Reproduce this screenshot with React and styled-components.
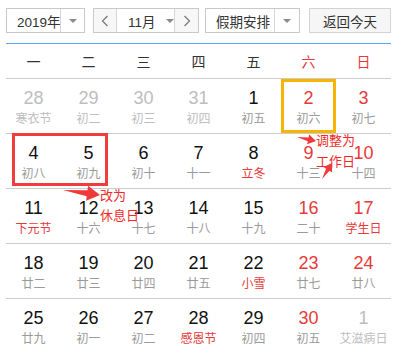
import React from "react";
import styled, { createGlobalStyle } from "styled-components";

const Global = createGlobalStyle`
  html, body { margin: 0; padding: 0; background: #fff; }
  body { font-family: "Liberation Sans", "Noto Sans CJK SC", sans-serif; }
`;

const FONT = `"Liberation Sans", "Noto Sans CJK SC", sans-serif`;
const RED = "#e8393a";

const Page = styled.div`
  position: relative;
  width: 400px;
  height: 360px;
  padding: 8px 0 0 6px;
  box-sizing: border-box;
  overflow: hidden;
  font-family: ${FONT};
`;

const Toolbar = styled.div`
  display: flex;
  align-items: center;
  height: 25px;
`;

const Select = styled.div`
  display: flex;
  width: ${(p) => p.$w}px;
  height: 25px;
  box-sizing: border-box;
  border: 1px solid #c9c9c9;
  background: #fff;
  margin-right: ${(p) => p.$mr || 0}px;
`;

const SelectLabel = styled.div`
  flex: 1;
  min-width: 0;
  display: flex;
  align-items: center;
  padding-left: ${(p) => p.$pl}px;
  font-size: 13.5px;
  color: #333;
  white-space: nowrap;
`;

const SelectArrow = styled.div`
  width: ${(p) => p.$w}px;
  flex: none;
  border-left: 1px solid #d6d6d6;
  display: flex;
  align-items: center;
  justify-content: center;
`;

const Caret = styled.span`
  width: 0;
  height: 0;
  flex: none;
  border-left: 4px solid transparent;
  border-right: 4px solid transparent;
  border-top: 4px solid #8a8a8a;
  margin-left: ${(p) => p.$ml || 0}px;
`;

const MonthGroup = styled.div`
  display: flex;
  width: 106px;
  height: 25px;
  box-sizing: border-box;
  border: 1px solid #c9c9c9;
  margin-right: 6px;
`;

const NavBtn = styled.div`
  width: ${(p) => p.$w}px;
  flex: none;
  background: #f7f7f7;
  display: flex;
  align-items: center;
  justify-content: center;
  ${(p) => (p.$side === "left" ? "border-right: 1px solid #d6d6d6;" : "border-left: 1px solid #d6d6d6;")}
`;

const MonthLabel = styled.div`
  flex: 1;
  min-width: 0;
  display: flex;
  align-items: center;
  padding-left: 11px;
  font-size: 13.5px;
  color: #333;
  background: #fff;
  white-space: nowrap;
`;

const TodayBtn = styled.div`
  width: 82px;
  height: 25px;
  box-sizing: border-box;
  border: 1px solid #d3d3d3;
  background: #f6f6f6;
  display: flex;
  align-items: center;
  justify-content: center;
  font-size: 13.5px;
  color: #333;
  white-space: nowrap;
`;

const Calendar = styled.div`
  width: 385px;
  margin-top: 10px;
  border-top: 1px solid #5aa5f5;
`;

const WeekHeader = styled.div`
  display: grid;
  grid-template-columns: repeat(7, 55px);
  height: 34px;
  border-bottom: 1px solid #cccccc;
`;

const WeekDay = styled.div`
  display: flex;
  align-items: center;
  justify-content: center;
  font-size: 14px;
  color: ${(p) => (p.$weekend ? RED : "#333")};
  font-family: "Noto Sans CJK SC", sans-serif;
`;

const Row = styled.div`
  display: grid;
  grid-template-columns: repeat(7, 55px);
  border-bottom: ${(p) => (p.$last ? "none" : "1px solid #cccccc")};
`;

const Cell = styled.div`
  height: 54px;
  box-sizing: border-box;
  padding-top: 9px;
  display: flex;
  flex-direction: column;
  align-items: center;
  box-shadow: ${(p) => (p.$mark ? "inset 0 0 0 3px #f7b500" : "none")};
`;

const DayNum = styled.div`
  font-size: 18px;
  line-height: 20px;
  color: ${(p) => (p.$other ? "#bdbdbd" : p.$red ? RED : "#111")};
`;

const Lunar = styled.div`
  margin-top: 2px;
  font-size: 12px;
  line-height: 16px;
  font-family: "Noto Sans CJK SC", sans-serif;
  color: ${(p) => (p.$other ? "#bdbdbd" : p.$fest ? RED : "#9a9a9a")};
  white-space: nowrap;
`;

const RedBox = styled.div`
  position: absolute;
  left: 12px;
  top: 133px;
  width: 96px;
  height: 53px;
  box-sizing: border-box;
  border: 3px solid #f03c3c;
  pointer-events: none;
`;

const Note = styled.div`
  position: absolute;
  left: ${(p) => p.$x}px;
  top: ${(p) => p.$y}px;
  font-size: 13px;
  line-height: ${(p) => p.$lh}px;
  color: #f02a2a;
  font-family: "Noto Sans CJK SC", sans-serif;
  white-space: nowrap;
`;

const ArrowLayer = styled.svg`
  position: absolute;
  left: 0;
  top: 0;
  pointer-events: none;
`;

const Chevron = ({ dir }) => (
  <svg width="8" height="12" viewBox="0 0 8 12">
    <polyline
      points={dir === "left" ? "6.5,1 1.5,6 6.5,11" : "1.5,1 6.5,6 1.5,11"}
      fill="none"
      stroke="#777"
      strokeWidth="1.2"
    />
  </svg>
);

const weeks = [
  [
    { d: 28, l: "寒衣节", o: true },
    { d: 29, l: "初二", o: true },
    { d: 30, l: "初三", o: true },
    { d: 31, l: "初四", o: true },
    { d: 1, l: "初五" },
    { d: 2, l: "初六", mark: true },
    { d: 3, l: "初七" },
  ],
  [
    { d: 4, l: "初八" },
    { d: 5, l: "初九" },
    { d: 6, l: "初十" },
    { d: 7, l: "十一" },
    { d: 8, l: "立冬", f: true },
    { d: 9, l: "十三" },
    { d: 10, l: "十四" },
  ],
  [
    { d: 11, l: "下元节", f: true },
    { d: 12, l: "十六" },
    { d: 13, l: "十七" },
    { d: 14, l: "十八" },
    { d: 15, l: "十九" },
    { d: 16, l: "二十" },
    { d: 17, l: "学生日", f: true },
  ],
  [
    { d: 18, l: "廿二" },
    { d: 19, l: "廿三" },
    { d: 20, l: "廿四" },
    { d: 21, l: "廿五" },
    { d: 22, l: "小雪", f: true },
    { d: 23, l: "廿七" },
    { d: 24, l: "廿八" },
  ],
  [
    { d: 25, l: "廿九" },
    { d: 26, l: "初一" },
    { d: 27, l: "初二" },
    { d: 28, l: "感恩节", f: true },
    { d: 29, l: "初四" },
    { d: 30, l: "初五" },
    { d: 1, l: "艾滋病日", o: true },
  ],
];

const weekNames = ["一", "二", "三", "四", "五", "六", "日"];

export default function App() {
  return (
    <>
      <Global />
      <Page>
        <Toolbar>
          <Select $w={79} $mr={8}>
            <SelectLabel $pl={10}>2019年</SelectLabel>
            <SelectArrow $w={23}>
              <Caret />
            </SelectArrow>
          </Select>
          <MonthGroup>
            <NavBtn $w={22} $side="left">
              <Chevron dir="left" />
            </NavBtn>
            <MonthLabel>
              11月
              <Caret $ml={10} />
            </MonthLabel>
            <NavBtn $w={23} $side="right">
              <Chevron dir="right" />
            </NavBtn>
          </MonthGroup>
          <Select $w={95} $mr={9}>
            <SelectLabel $pl={10}>假期安排</SelectLabel>
            <SelectArrow $w={24}>
              <Caret />
            </SelectArrow>
          </Select>
          <TodayBtn>返回今天</TodayBtn>
        </Toolbar>
        <Calendar>
          <WeekHeader>
            {weekNames.map((w, i) => (
              <WeekDay key={w} $weekend={i >= 5}>
                {w}
              </WeekDay>
            ))}
          </WeekHeader>
          {weeks.map((row, ri) => (
            <Row key={ri} $last={ri === weeks.length - 1}>
              {row.map((c, ci) => (
                <Cell key={ci} $mark={c.mark}>
                  <DayNum $other={c.o} $red={ci >= 5}>
                    {c.d}
                  </DayNum>
                  <Lunar $other={c.o} $fest={c.f}>
                    {c.l}
                  </Lunar>
                </Cell>
              ))}
            </Row>
          ))}
        </Calendar>

        <RedBox />
        <Note $x={100} $y={185} $lh={20}>
          改为
          <br />
          休息日
        </Note>
        <Note $x={316} $y={129} $lh={21}>
          调整为
          <br />
          工作日
        </Note>
        <ArrowLayer width="400" height="360" viewBox="0 0 400 360">
          <polygon
            fill="#f0393b"
            points="63,190 87.5,190.3 88.1,185.8 100,195 86.1,200.7 86.7,196.2"
          />
          <polygon
            fill="#f0393b"
            points="297,137 308.6,137.4 309.2,134.5 316,141 307.1,144.3 307.8,141.3"
          />
          <polygon
            fill="#f0393b"
            points="322,179 326.1,168.7 323.5,167.1 332,163 332,172.4 329.5,170.8"
          />
        </ArrowLayer>
      </Page>
    </>
  );
}
